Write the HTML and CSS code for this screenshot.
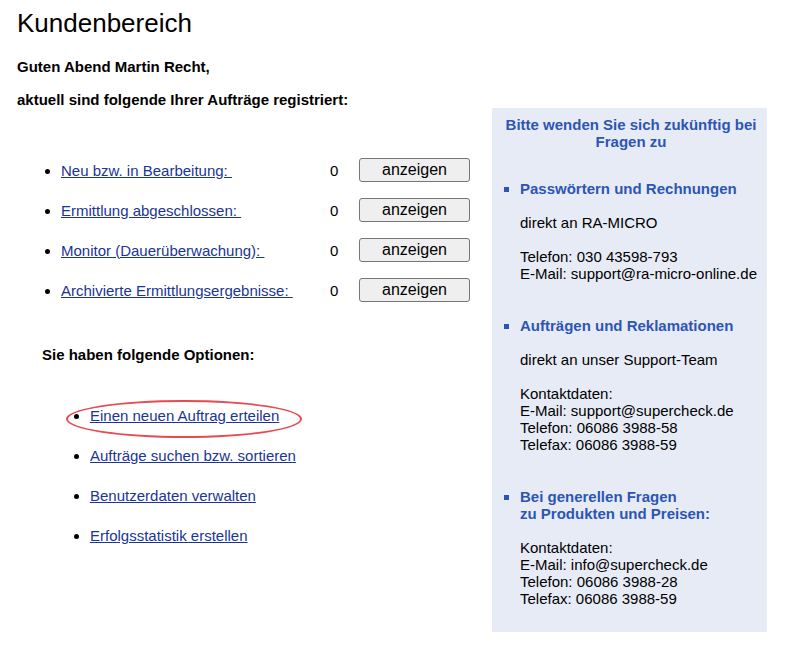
FILE: index.html
```html
<!DOCTYPE html>
<html lang="de">
<head>
    <meta charset="UTF-8">
    <meta name="viewport" content="width=device-width, initial-scale=1.0">
    <title>Kundenbereich</title>
    <link rel="stylesheet" href="styles.css">
</head>
<body>
    <div class="page">
        <h1 class="title">Kundenbereich</h1>

        <div class="columns">
            <div class="main">
                <p class="greeting">Guten Abend Martin Recht,</p>
                <p class="greeting">aktuell sind folgende Ihrer Aufträge registriert:</p>

                <ul class="orders">
                    <li>
                        <div class="order-row">
                            <a href="#">Neu bzw. in Bearbeitung:&nbsp;</a>
                            <span class="count">0</span>
                            <button type="button" class="show-btn">anzeigen</button>
                        </div>
                    </li>
                    <li>
                        <div class="order-row">
                            <a href="#">Ermittlung abgeschlossen:&nbsp;</a>
                            <span class="count">0</span>
                            <button type="button" class="show-btn">anzeigen</button>
                        </div>
                    </li>
                    <li>
                        <div class="order-row">
                            <a href="#">Monitor (Dauerüberwachung):&nbsp;</a>
                            <span class="count">0</span>
                            <button type="button" class="show-btn">anzeigen</button>
                        </div>
                    </li>
                    <li>
                        <div class="order-row">
                            <a href="#">Archivierte Ermittlungsergebnisse:&nbsp;</a>
                            <span class="count">0</span>
                            <button type="button" class="show-btn">anzeigen</button>
                        </div>
                    </li>
                </ul>

                <p class="options-title">Sie haben folgende Optionen:</p>

                <ul class="options">
                    <li class="highlight"><a href="#">Einen neuen Auftrag erteilen</a></li>
                    <li><a href="#">Aufträge suchen bzw. sortieren</a></li>
                    <li><a href="#">Benutzerdaten verwalten</a></li>
                    <li><a href="#">Erfolgsstatistik erstellen</a></li>
                </ul>
            </div>

            <div class="help">
                <p class="help-title">Bitte wenden Sie sich zukünftig bei Fragen zu</p>
                <ul class="help-list">
                    <li>
                        <strong>Passwörtern und Rechnungen</strong>
                        <p>direkt an RA-MICRO</p>
                        <p>Telefon: 030 43598-793<br>E-Mail: support@ra-micro-online.de</p>
                    </li>
                    <li>
                        <strong>Aufträgen und Reklamationen</strong>
                        <p>direkt an unser Support-Team</p>
                        <p>Kontaktdaten:<br>E-Mail: support@supercheck.de<br>Telefon: 06086 3988-58<br>Telefax: 06086 3988-59</p>
                    </li>
                    <li>
                        <strong>Bei generellen Fragen<br>zu Produkten und Preisen:</strong>
                        <p>Kontaktdaten:<br>E-Mail: info@supercheck.de<br>Telefon: 06086 3988-28<br>Telefax: 06086 3988-59</p>
                    </li>
                </ul>
            </div>
        </div>
    </div>
</body>
</html>
```
FILE: styles.css
```css
* {
    margin: 0;
    padding: 0;
    box-sizing: border-box;
}

body {
    font-family: 'Liberation Sans', Arial, sans-serif;
    font-size: 15px;
    line-height: 17px;
    color: #000;
    background: #fff;
}

.page {
    padding: 8px 18px 0 17px;
}

.title {
    font-size: 26px;
    font-weight: normal;
    line-height: 30px;
}

.columns {
    display: flex;
    justify-content: space-between;
    align-items: flex-start;
}

.main {
    width: 460px;
}

.greeting {
    font-weight: bold;
    margin-top: 16px;
}

.greeting:first-child {
    margin-top: 20px;
}

a {
    color: #1a3596;
}

/* Auftragsliste */
.orders {
    list-style: disc;
    margin: 42px 0 0 44px;
}

.order-row {
    display: flex;
    align-items: center;
    height: 40px;
}

.orders a {
    width: 269px;
}

.count {
    width: 29px;
}

.show-btn {
    width: 111px;
    height: 24px;
    font-family: inherit;
    font-size: 16px;
    color: #000;
    background: #efefef;
    border: 1px solid #767676;
    border-radius: 3px;
}

/* Optionen */
.options-title {
    font-weight: bold;
    margin: 36px 0 0 25px;
}

.options {
    list-style: disc;
    margin: 44px 0 0 73px;
}

.options li {
    height: 40px;
}

.options .highlight {
    position: relative;
}

.options .highlight::before {
    content: "";
    position: absolute;
    left: -24px;
    top: -7px;
    width: 232px;
    height: 34px;
    border: 2.5px solid #e84a4f;
    border-radius: 50%;
}

/* Hilfe-Kasten */
.help {
    width: 275px;
    margin-top: 70px;
    padding: 8px 10px 25px 13px;
    background: #e7ebf6;
    color: #000;
}

.help-title {
    font-weight: bold;
    color: #2c56b3;
    text-align: center;
}

.help-list {
    list-style: square;
    margin: 30px 0 0 15px;
}

.help-list li {
    color: #2c56b3;
}

.help-list li + li {
    margin-top: 35px;
}

.help-list strong {
    color: #2c56b3;
}

.help-list p {
    color: #000;
    margin-top: 17px;
}
```
